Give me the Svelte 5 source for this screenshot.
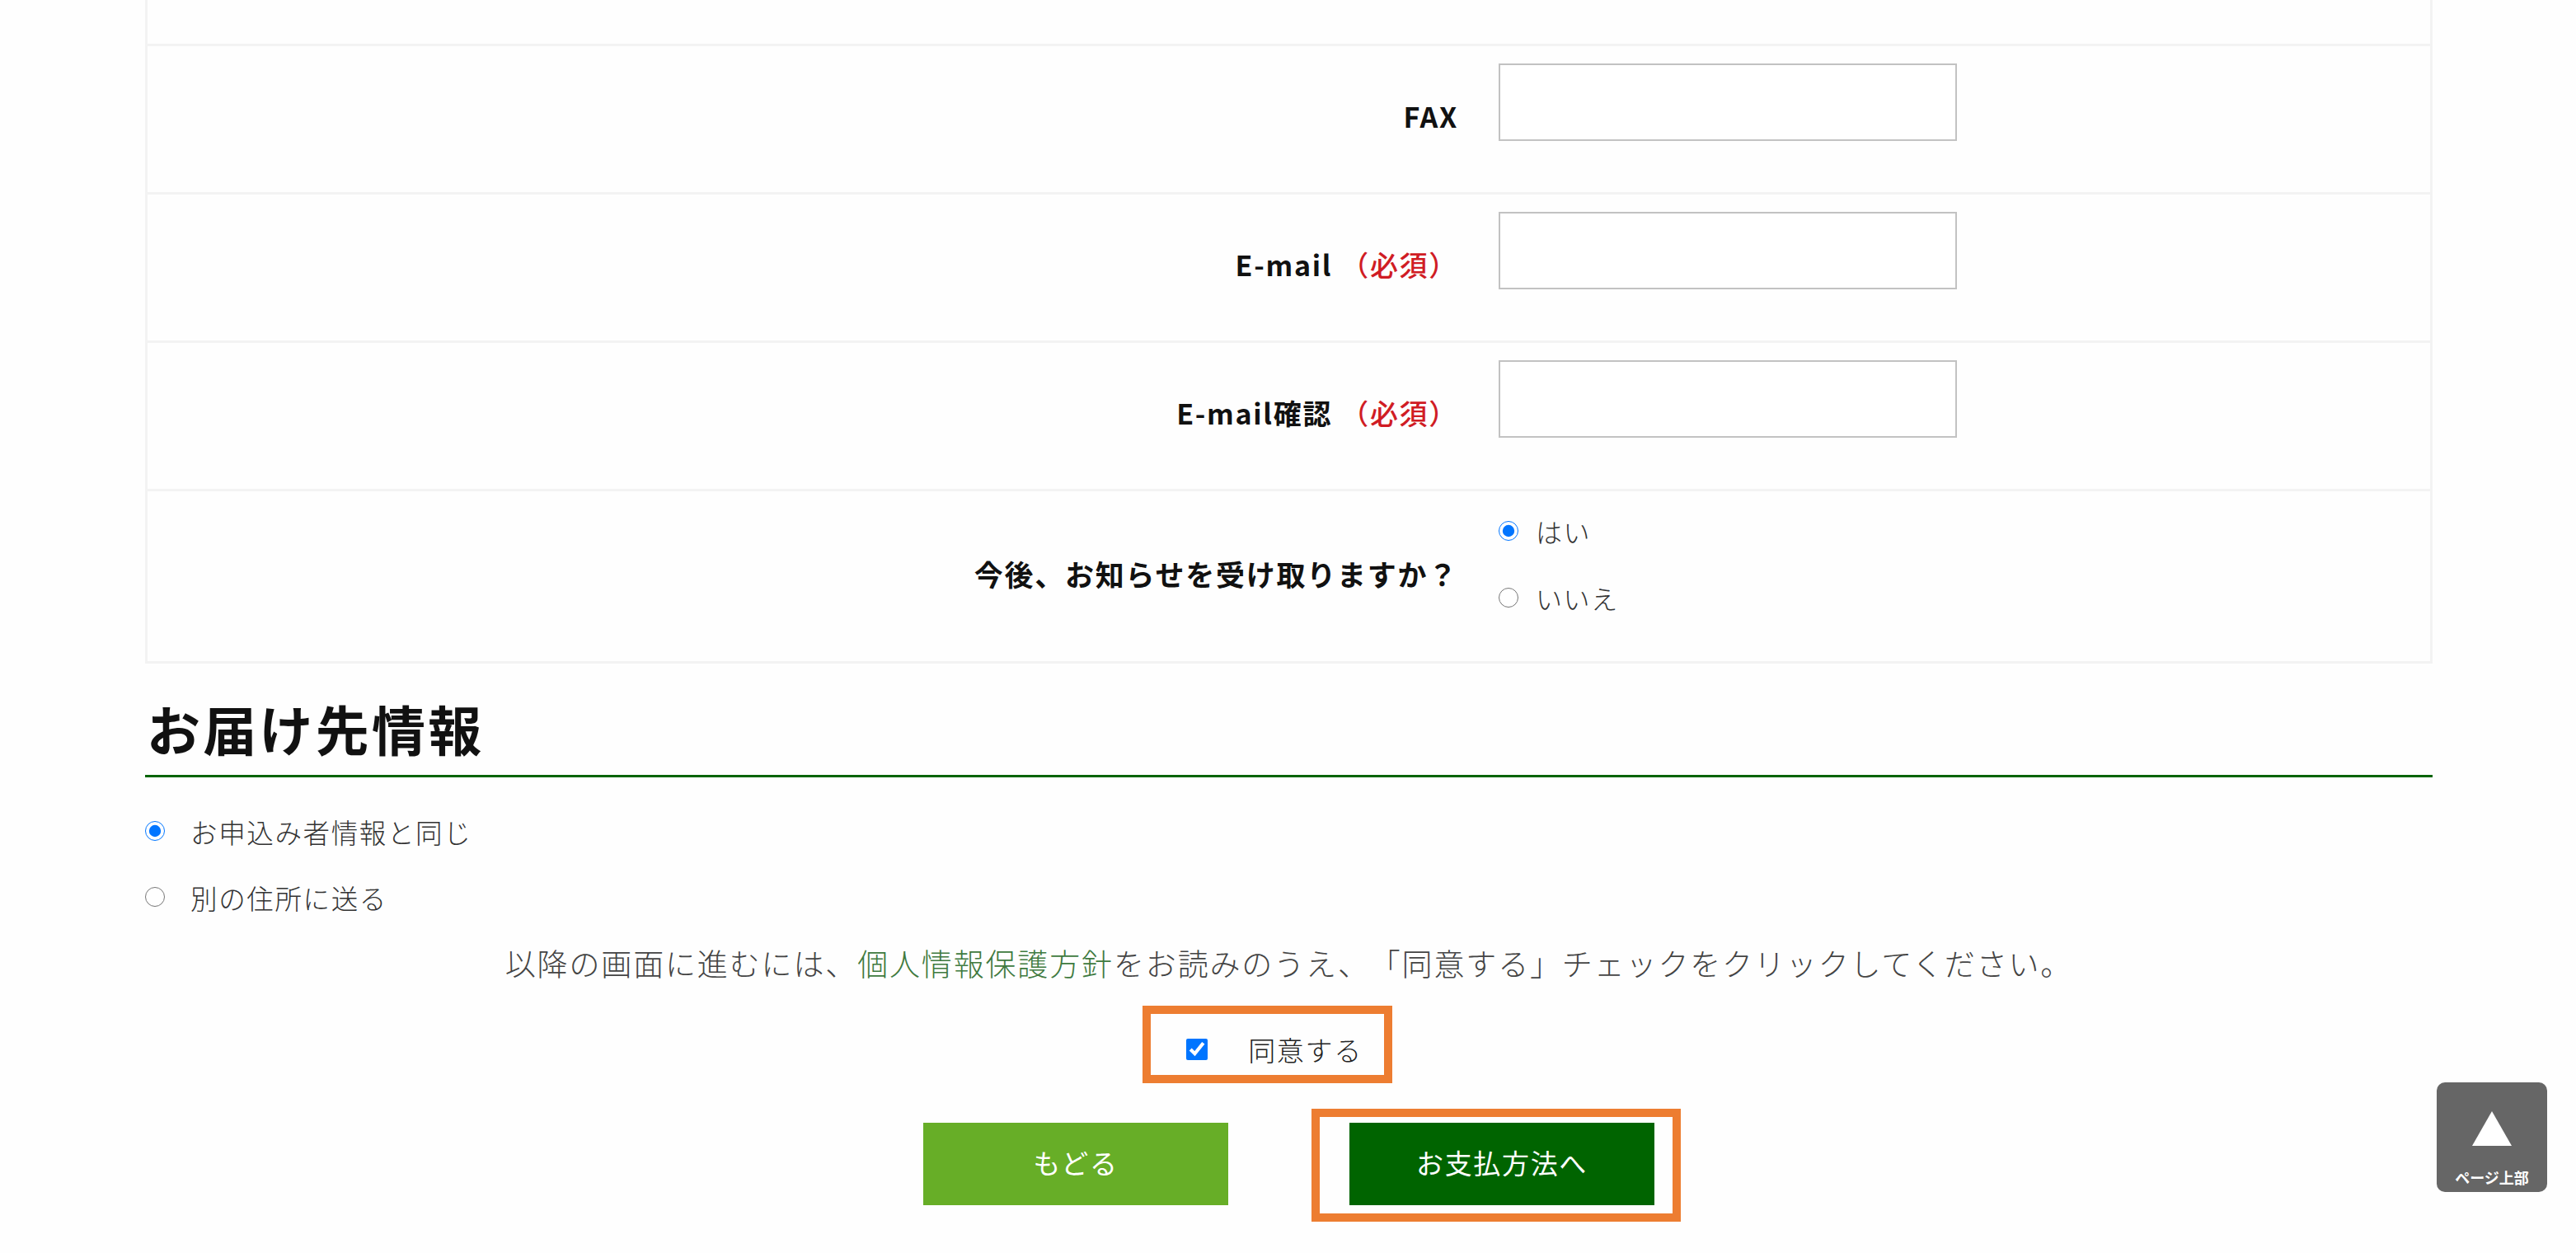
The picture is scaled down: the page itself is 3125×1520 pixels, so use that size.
<script lang="ts">
  const rows = [
    { label: 'FAX', required: false },
    { label: 'E-mail', required: true },
    { label: 'E-mail確認', required: true }
  ];

  let notify = $state('yes');
  let destination = $state('same');
  let agreed = $state(true);
</script>

<div class="page">
  <div class="form-table">
    <div class="row row-cut"></div>
    {#each rows as row}
      <div class="row">
        <div class="label">
          {row.label}{#if row.required}<span class="required">（必須）</span>{/if}
        </div>
        <div class="field">
          <input type="text" />
        </div>
      </div>
    {/each}
    <div class="row row-radio">
      <div class="label">今後、お知らせを受け取りますか？</div>
      <div class="field radios">
        <label class="radio"><input type="radio" value="yes" bind:group={notify} />はい</label>
        <label class="radio"><input type="radio" value="no" bind:group={notify} />いいえ</label>
      </div>
    </div>
  </div>

  <h2>お届け先情報</h2>

  <div class="destination">
    <label class="radio"><input type="radio" value="same" bind:group={destination} />お申込み者情報と同じ</label>
    <label class="radio"><input type="radio" value="other" bind:group={destination} />別の住所に送る</label>
  </div>

  <p class="notice">
    以降の画面に進むには、<a href="#policy">個人情報保護方針</a>をお読みのうえ、「同意する」チェックをクリックしてください。
  </p>

  <div class="agree">
    <label>
      <input type="checkbox" bind:checked={agreed} />同意する
      <span class="callout callout-agree"></span>
    </label>
  </div>

  <div class="buttons">
    <button type="button" class="back">もどる</button>
    <button type="button" class="next">
      お支払方法へ
      <span class="callout callout-next"></span>
    </button>
  </div>

  <button type="button" class="to-top">
    <svg width="48" height="42" viewBox="0 0 48 42"><path d="M24 0 48 42H0Z" fill="#fff" /></svg>
    <span>ページ上部</span>
  </button>
</div>

<style>
  :global(body) {
    background: #fefefe;
  }

  .page {
    height: 1520px;
    overflow: hidden;
    box-sizing: border-box;
    padding: 0 174px 0 176px;
    font-family: 'Noto Sans CJK JP', 'Noto Sans', sans-serif;
    color: #333;
    text-spacing-trim: space-all;
  }

  .form-table {
    border: solid #f3f3f3;
    border-width: 0 3px;
  }

  .row {
    display: grid;
    grid-template-columns: 1639px 1fr;
    height: 180px;
    box-sizing: border-box;
    border-bottom: 3px solid #f3f3f3;
  }

  .row-cut {
    height: 56px;
  }

  .row-radio {
    height: 209px;
  }

  .label {
    display: flex;
    justify-content: flex-end;
    align-items: center;
    padding: 0 49px 8px 0;
    font-size: 34px;
    letter-spacing: 0.05em;
    font-weight: 700;
    color: #111;
  }

  .row-radio .label {
    font-size: 35px;
  }

  .required {
    color: #d01c24;
    font-weight: 500;
    margin-left: 10px;
  }

  .field {
    padding-top: 21px;
  }

  .field input[type='text'] {
    display: block;
    width: 556px;
    height: 94px;
    box-sizing: border-box;
    border: 2px solid #c2c2c2;
    background: #fff;
  }

  .radios {
    display: flex;
    flex-direction: column;
    gap: 37px;
    padding-top: 26px;
  }

  .radio {
    display: flex;
    align-items: center;
    gap: 21px;
    height: 44px;
    font-size: 32px;
    letter-spacing: 0.05em;
    font-weight: 300;
  }

  .radio input {
    width: 24px;
    height: 24px;
    margin: 0;
  }

  h2 {
    margin: 0;
    margin-top: 38px;
    height: 97px;
    border-bottom: 3px solid #006400;
    font-size: 65px;
    line-height: 80px;
    letter-spacing: 0.05em;
    font-weight: 700;
    color: #111;
    padding-left: 2px;
  }

  .destination {
    display: flex;
    flex-direction: column;
    gap: 36px;
    margin-top: 43px;
  }

  .destination .radio {
    gap: 31px;
    font-size: 32.5px;
  }

  .notice {
    margin: 32px 0 0;
    text-align: center;
    font-size: 37px;
    line-height: 52px;
    letter-spacing: 0.05em;
    font-weight: 300;
    color: #444;
  }

  .notice a {
    color: #3f7a3f;
    text-decoration: none;
  }

  .agree {
    display: flex;
    justify-content: center;
    margin-top: 55px;
    padding-right: 35px;
  }

  .agree label {
    position: relative;
    display: flex;
    align-items: center;
    gap: 49px;
    height: 48px;
    font-size: 33px;
    letter-spacing: 0.05em;
    font-weight: 300;
    color: #222;
  }

  .agree input {
    width: 26px;
    height: 26px;
    margin: 0;
  }

  .callout {
    position: absolute;
    box-sizing: border-box;
    border: 10px solid #ed7d31;
    pointer-events: none;
  }

  .callout-agree {
    inset: -29px -36px -17px -53px;
  }

  .callout-next {
    inset: -17px -32px -20px -46px;
  }

  .buttons {
    display: flex;
    justify-content: center;
    gap: 147px;
    margin-top: 65px;
  }

  .buttons button {
    position: relative;
    width: 370px;
    height: 100px;
    border: none;
    padding: 0 0 4px;
    color: #fff;
    font-family: inherit;
    font-size: 33px;
    letter-spacing: 0.05em;
    font-weight: 400;
  }

  .back {
    background: #67ae27;
  }

  .next {
    background: #006400;
  }

  .to-top {
    position: fixed;
    right: 35px;
    bottom: 74px;
    width: 134px;
    height: 133px;
    display: flex;
    flex-direction: column;
    align-items: center;
    padding: 35px 0 0;
    border: none;
    border-radius: 10px;
    background: #666;
    color: #fff;
    font-family: inherit;
  }

  .to-top span {
    margin-top: 26px;
    font-size: 18px;
    line-height: 24px;
    font-weight: 700;
  }
</style>
